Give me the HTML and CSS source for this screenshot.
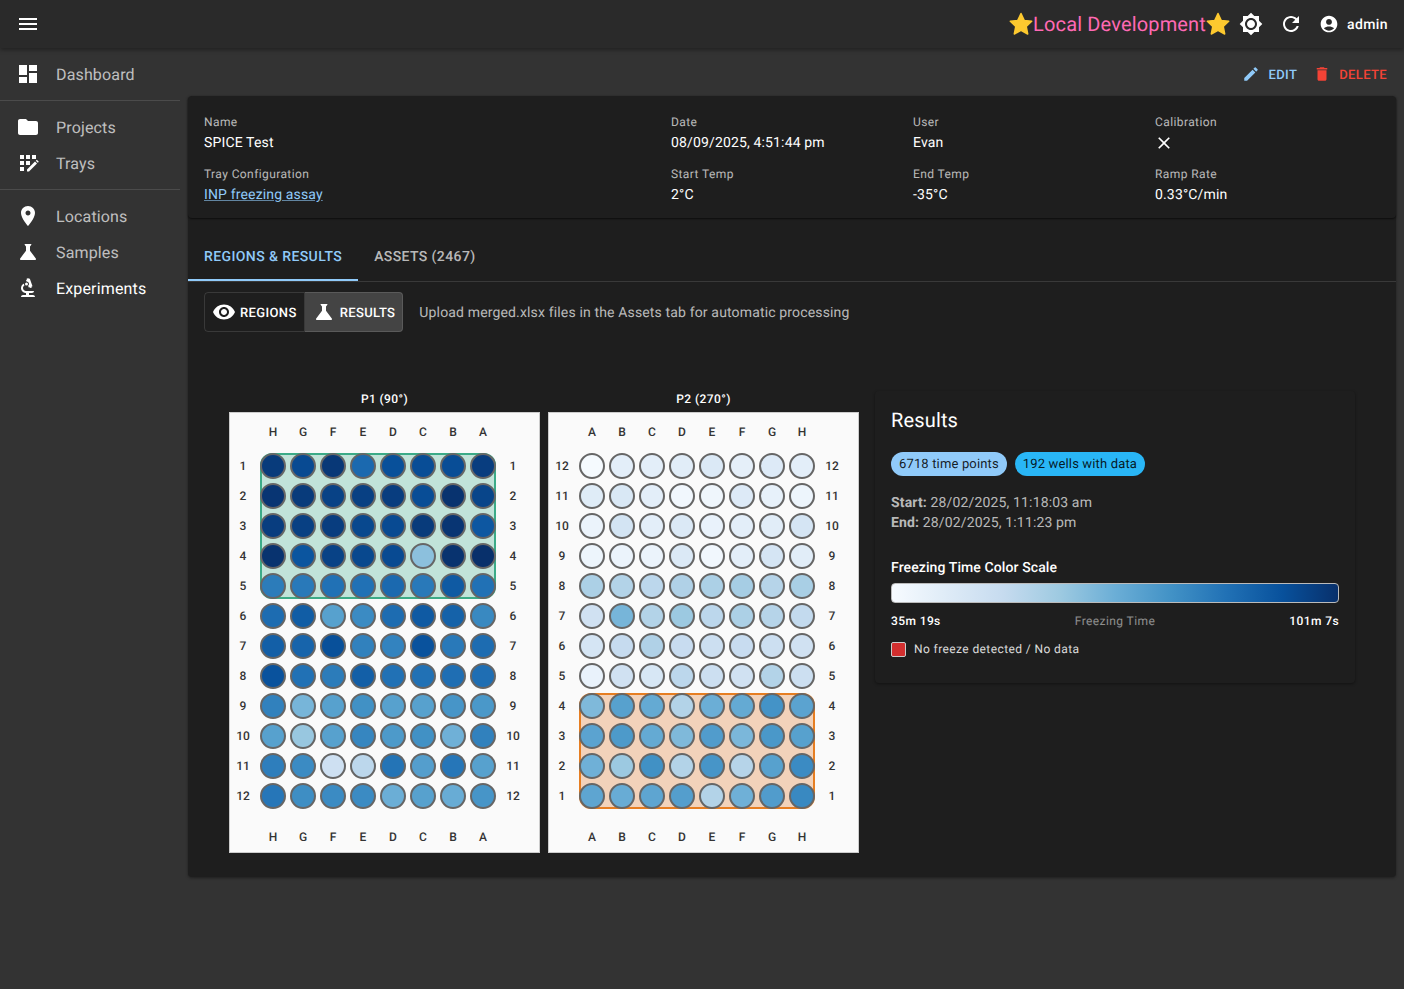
FILE: index.html
```html
<!DOCTYPE html>
<html lang="en">
<head>
    <meta charset="UTF-8">
    <meta name="viewport" content="width=device-width, initial-scale=1.0">
    <title>SPICE Test</title>
    <link rel="stylesheet" href="styles.css">
</head>
<body>

    <header class="topbar">
        <button class="icon-btn menu-btn">
            <svg viewBox="0 0 24 24"><path d="M3 18h18v-2H3v2zm0-5h18v-2H3v2zm0-7v2h18V6H3z"/></svg>
        </button>
        <div class="topbar-right">
            <div class="env-title">
                <svg class="star" viewBox="0 0 24 24"><path d="M12 1.500l3.200 6.900 7.500.9-5.500 5.200 1.500 7.500-6.700-3.700-6.700 3.700 1.500-7.500-5.500-5.200 7.500-.9z"/></svg>
                <span>Local Development</span>
                <svg class="star" viewBox="0 0 24 24"><path d="M12 1.500l3.200 6.900 7.500.9-5.500 5.200 1.500 7.500-6.700-3.700-6.700 3.700 1.500-7.500-5.500-5.200 7.500-.9z"/></svg>
            </div>
            <button class="icon-btn">
                <svg viewBox="0 0 24 24"><path d="M20 8.69V4h-4.690L12 .69 8.690 4H4v4.690L.69 12 4 15.310V20h4.690L12 23.310 15.310 20H20v-4.690L23.310 12 20 8.690zM12 18c-3.310 0-6-2.690-6-6s2.690-6 6-6 6 2.690 6 6-2.690 6-6 6zm0-10c-2.210 0-4 1.790-4 4s1.790 4 4 4 4-1.790 4-4-1.790-4-4-4z"/></svg>
            </button>
            <button class="icon-btn">
                <svg viewBox="0 0 24 24"><path d="M17.650 6.350C16.200 4.900 14.210 4 12 4c-4.420 0-7.990 3.580-7.990 8s3.570 8 7.990 8c3.730 0 6.840-2.550 7.730-6h-2.080c-.82 2.330-3.040 4-5.650 4-3.310 0-6-2.690-6-6s2.690-6 6-6c1.660 0 3.140.69 4.220 1.780L13 11h7V4l-2.350 2.350z"/></svg>
            </button>
            <div class="user">
                <svg viewBox="0 0 24 24"><path d="M12 2C6.480 2 2 6.480 2 12s4.480 10 10 10 10-4.480 10-10S17.520 2 12 2zm0 4c1.930 0 3.500 1.570 3.500 3.500S13.930 13 12 13s-3.500-1.570-3.500-3.500S10.070 6 12 6zm0 14c-2.030 0-4.430-.82-6.140-2.880C7.550 15.800 9.680 15 12 15s4.450.8 6.140 2.120C16.430 19.180 14.030 20 12 20z"/></svg>
                <span>admin</span>
            </div>
        </div>
    </header>

    <div class="layout">
        <nav class="sidebar">
            <a class="nav-item" href="#dashboard">
                <svg viewBox="0 0 24 24"><path d="M3 13h8V3H3v10zm0 8h8v-6H3v6zm10 0h8V11h-8v10zm0-18v6h8V3h-8z"/></svg>
                Dashboard
            </a>
            <hr class="nav-divider">
            <a class="nav-item" href="#projects">
                <svg viewBox="0 0 24 24"><path d="M10 4H4c-1.100 0-1.990.9-1.990 2L2 18c0 1.100.9 2 2 2h16c1.100 0 2-.9 2-2V8c0-1.100-.9-2-2-2h-8l-2-2z"/></svg>
                Projects
            </a>
            <a class="nav-item" href="#trays">
                <svg viewBox="0 0 24 24"><path d="M4 4h4v4H4zM10 4h4v4h-4zM16 4h4v4h-4zM4 10h4v4H4zM10 10h4v4h-4zM4 16h4v4H4zM11 20.500v-2l8-8 2 2-8 8zM19.800 9.700l1-1 2 2-1 1z"/></svg>
                Trays
            </a>
            <hr class="nav-divider">
            <a class="nav-item" href="#locations">
                <svg viewBox="0 0 24 24"><path d="M12 2C8.130 2 5 5.130 5 9c0 5.250 7 13 7 13s7-7.750 7-13c0-3.870-3.130-7-7-7zm0 9.500c-1.380 0-2.500-1.120-2.500-2.500s1.120-2.500 2.500-2.500 2.500 1.120 2.500 2.500-1.120 2.500-2.500 2.500z"/></svg>
                Locations
            </a>
            <a class="nav-item" href="#samples">
                <svg viewBox="0 0 24 24"><path d="M19.800 18.400 14 10.670V6.500l1.350-1.690c.26-.33.03-.81-.39-.81H9.040c-.42 0-.65.48-.39.81L10 6.500v4.170L4.200 18.400c-.49.66-.02 1.600.8 1.600h14c.82 0 1.290-.94.8-1.600z"/></svg>
                Samples
            </a>
            <a class="nav-item active" href="#experiments">
                <svg viewBox="0 0 24 24"><path d="M7 19c-1.100 0-2 .9-2 2h14c0-1.100-.9-2-2-2h-4v-2h3c1.100 0 2-.9 2-2h-8c-1.660 0-3-1.340-3-3 0-1.090.59-2.040 1.460-2.560C8.170 9.030 8 8.540 8 8c0-.21.04-.42.09-.62C6.280 8.130 5 9.920 5 12c0 2.760 2.240 5 5 5v2H7z"/><path d="M10.560 5.510C11.910 5.540 13 6.640 13 8c0 .75-.33 1.410-.85 1.870l.59 1.620.94-.34.34.94 1.880-.68-.34-.94.94-.34-2.740-7.520-.94.34-.34-.94-1.880.68.34.94-.94.35z"/><circle cx="10.500" cy="8" r="1.500"/></svg>
                Experiments
            </a>
        </nav>

        <main class="content">
            <div class="actions">
                <a class="action edit" href="#edit">
                    <svg viewBox="0 0 24 24"><path d="M3 17.250V21h3.750L17.810 9.940l-3.750-3.750L3 17.250zM20.710 7.040c.39-.39.39-1.020 0-1.410l-2.340-2.340a.9959.9959 0 0 0-1.410 0l-1.830 1.830 3.750 3.750 1.830-1.830z"/></svg>
                    Edit
                </a>
                <a class="action delete" href="#delete">
                    <svg viewBox="0 0 24 24"><path d="M6 19c0 1.100.9 2 2 2h8c1.100 0 2-.9 2-2V7H6v12zM19 4h-3.500l-1-1h-5l-1 1H5v2h14V4z"/></svg>
                    Delete
                </a>
            </div>

            <section class="panel">
                <div class="details">
                    <div class="field"><label>Name</label><p>SPICE Test</p></div>
                    <div class="field"><label>Date</label><p>08/09/2025, 4:51:44 pm</p></div>
                    <div class="field"><label>User</label><p>Evan</p></div>
                    <div class="field">
                        <label>Calibration</label>
                        <p><svg class="cross" viewBox="0 0 24 24"><path d="M19 6.410 17.590 5 12 10.590 6.410 5 5 6.410 10.590 12 5 17.590 6.410 19 12 13.410 17.590 19 19 17.590 13.410 12z"/></svg></p>
                    </div>
                    <div class="field"><label>Tray Configuration</label><p><a href="#tray">INP freezing assay</a></p></div>
                    <div class="field"><label>Start Temp</label><p>2°C</p></div>
                    <div class="field"><label>End Temp</label><p>-35°C</p></div>
                    <div class="field"><label>Ramp Rate</label><p>0.33°C/min</p></div>
                </div>

                <div class="tabs">
                    <a class="tab active" href="#results">Regions &amp; Results</a>
                    <a class="tab" href="#assets">Assets (2467)</a>
                </div>

                <div class="view-row">
                    <div class="toggle">
                        <button class="toggle-btn">
                            <svg viewBox="0 0 24 24"><path d="M12 4.500C7 4.500 2.730 7.610 1 12c1.730 4.390 6 7.500 11 7.500s9.270-3.110 11-7.500c-1.730-4.390-6-7.500-11-7.500zM12 17c-2.760 0-5-2.240-5-5s2.240-5 5-5 5 2.240 5 5-2.240 5-5 5zm0-8c-1.660 0-3 1.340-3 3s1.340 3 3 3 3-1.340 3-3-1.340-3-3-3z"/></svg>
                            Regions
                        </button>
                        <button class="toggle-btn selected">
                            <svg viewBox="0 0 24 24"><path d="M19.800 18.400 14 10.670V6.500l1.350-1.690c.26-.33.03-.81-.39-.81H9.040c-.42 0-.65.48-.39.81L10 6.500v4.170L4.200 18.400c-.49.66-.02 1.600.8 1.600h14c.82 0 1.290-.94.8-1.600z"/></svg>
                            Results
                        </button>
                    </div>
                    <p class="hint">Upload merged.xlsx files in the Assets tab for automatic processing</p>
                </div>

                <div class="results-row">
                    <div class="plate-col">
                        <h4>P1 (90°)</h4>
                        <div class="plate" id="plate-1"></div>
                    </div>
                    <div class="plate-col">
                        <h4>P2 (270°)</h4>
                        <div class="plate" id="plate-2"></div>
                    </div>

                    <aside class="summary">
                        <h3>Results</h3>
                        <div class="chips">
                            <span class="chip light">6718 time points</span>
                            <span class="chip sky">192 wells with data</span>
                        </div>
                        <p class="times"><b>Start:</b> 28/02/2025, 11:18:03 am</p>
                        <p class="times"><b>End:</b> 28/02/2025, 1:11:23 pm</p>
                        <h5>Freezing Time Color Scale</h5>
                        <div class="scale-bar"></div>
                        <div class="scale-labels">
                            <b>35m 19s</b>
                            <span>Freezing Time</span>
                            <b>101m 7s</b>
                        </div>
                        <div class="legend">
                            <i class="swatch"></i>
                            <span>No freeze detected / No data</span>
                        </div>
                    </aside>
                </div>
            </section>
        </main>
    </div>

    <script src="script.js"></script>
</body>
</html>
```

FILE: styles.css
```css
* {
    box-sizing: border-box;
}
body {
    font-family: Roboto, "Liberation Sans", sans-serif;
    text-rendering: geometricPrecision;
    background-color: #333;
    color: #fff;
    margin: 0;
    padding: 0;
    min-height: 989px;
}
svg {
    display: block;
    fill: currentColor;
}
a {
    text-decoration: none;
    color: inherit;
}
p, h3, h4, h5 {
    margin: 0;
}

/* top bar */
.topbar {
    height: 48px;
    background-color: #2a2a2a;
    box-shadow: 0 2px 4px rgba(0, 0, 0, 0.35);
    display: flex;
    align-items: center;
    justify-content: space-between;
    padding: 0 16px 0 8px;
    position: relative;
}
.icon-btn {
    width: 40px;
    height: 40px;
    padding: 8px;
    background: none;
    border: none;
    color: #fff;
}
.topbar-right {
    display: flex;
    align-items: center;
}
.env-title {
    display: flex;
    align-items: center;
    font-size: 20px;
    letter-spacing: 0.15px;
    color: #ff69b4;
    margin-right: 1px;
}
.star {
    width: 24px;
    height: 24px;
    fill: #fdc92f;
    stroke: #fdc92f;
    stroke-width: 1.5;
    stroke-linejoin: round;
}
.user {
    display: flex;
    align-items: center;
    gap: 8px;
    padding-top: 2px;
    font-size: 14px;
    font-weight: 500;
    letter-spacing: 0.4px;
    margin-left: 8px;
}
.user svg {
    width: 20px;
    height: 20px;
    margin-bottom: 2px;
}

/* sidebar */
.layout {
    display: flex;
}
.sidebar {
    width: 180px;
    flex-shrink: 0;
    padding-top: 8px;
}
.nav-item {
    height: 36px;
    display: flex;
    align-items: center;
    padding-left: 16px;
    font-size: 16px;
    letter-spacing: 0.15px;
    color: rgba(255, 255, 255, 0.7);
}
.nav-item svg {
    width: 24px;
    height: 24px;
    color: #fff;
    margin-right: 16px;
}
.nav-item.active {
    color: #fff;
}
.nav-divider {
    border: none;
    border-top: 1px solid rgba(255, 255, 255, 0.12);
    margin: 8px 0;
}

/* main */
.content {
    flex: 1;
    padding: 0 8px;
}
.actions {
    height: 48px;
    display: flex;
    justify-content: flex-end;
    align-items: center;
    gap: 16px;
    padding: 4px 9px 0 0;
}
.action {
    display: flex;
    align-items: center;
    gap: 8px;
    padding-top: 2px;
    font-size: 13px;
    font-weight: 500;
    letter-spacing: 0.37px;
    text-transform: uppercase;
}
.action svg {
    width: 18px;
    height: 18px;
    margin-bottom: 2px;
}
.action.edit {
    color: #90caf9;
}
.action.delete {
    color: #f44336;
}
.panel {
    background-color: #1e1e1e;
    border-radius: 4px;
    box-shadow: 0 1px 3px rgba(0, 0, 0, 0.4);
    padding-bottom: 24px;
}
.details {
    height: 122px;
    padding: 16px 16px 0;
    display: grid;
    grid-template-columns: 467px 242px 242px 1fr;
    grid-auto-rows: 52px;
    border-radius: 4px;
    box-shadow: 0 1px 2px rgba(0, 0, 0, 0.6);
}
.field label {
    display: block;
    font-size: 12px;
    line-height: 20px;
    letter-spacing: 0.4px;
    color: rgba(255, 255, 255, 0.7);
}
.field p {
    font-size: 14px;
    line-height: 22px;
    letter-spacing: 0.15px;
    height: 20px;
}
.field a {
    color: #90caf9;
    text-decoration: underline;
    text-decoration-color: rgba(144, 202, 249, 0.6);
}
.cross {
    width: 20px;
    height: 20px;
    margin: 1px 0 0 -1px;
}
.tabs {
    display: flex;
    margin-top: 15px;
    height: 49px;
    border-bottom: 1px solid rgba(255, 255, 255, 0.12);
}
.tab {
    height: 48px;
    padding: 0 16px;
    display: flex;
    align-items: center;
    font-size: 14px;
    font-weight: 500;
    letter-spacing: 0.4px;
    text-transform: uppercase;
    color: rgba(255, 255, 255, 0.7);
}
.tab.active {
    color: #90caf9;
    border-bottom: 2px solid #90caf9;
    padding-top: 2px;
}
.view-row {
    display: flex;
    align-items: center;
    gap: 16px;
    padding: 10px 16px 0;
}
.toggle {
    display: flex;
    height: 40px;
}
.toggle-btn {
    display: flex;
    align-items: center;
    gap: 4px;
    padding: 2px 7px 0;
    font-family: inherit;
    font-size: 13px;
    font-weight: 500;
    letter-spacing: 0.37px;
    text-transform: uppercase;
    text-rendering: geometricPrecision;
    color: #fff;
    background: none;
    border: 1px solid rgba(255, 255, 255, 0.12);
    border-radius: 4px 0 0 4px;
}
.toggle-btn svg {
    width: 24px;
    height: 24px;
    margin-bottom: 2px;
}
.toggle-btn.selected {
    background-color: #444;
    border-left: none;
    border-radius: 0 4px 4px 0;
}
.hint {
    font-size: 14px;
    line-height: 22px;
    padding-top: 2px;
    letter-spacing: 0.15px;
    color: rgba(255, 255, 255, 0.7);
}

/* plates + results card */
.results-row {
    display: flex;
    align-items: flex-start;
    padding: 59px 0 0 41px;
    gap: 8px;
}
.plate-col h4 {
    font-size: 12px;
    font-weight: 500;
    line-height: 16px;
    letter-spacing: 0.4px;
    text-align: center;
    margin-bottom: 5px;
}
.plate {
    width: 311px;
    height: 441px;
    background-color: #fafafa;
    border: 1px solid #ccc;
    display: grid;
    grid-template-columns: 28px repeat(8, 30px) 30px;
    grid-template-rows: 38px repeat(12, 30px) 41px;
    font-size: 12px;
    font-weight: 500;
    color: #333;
}
.plate-label {
    display: flex;
    align-items: center;
    justify-content: center;
}
.plate-label.left {
    margin-right: 2px;
}
.plate-label.bottom {
    height: 30px;
    align-self: end;
}
.well {
    width: 26px;
    height: 26px;
    margin: 2px;
    border: 2px solid #666;
    border-radius: 50%;
    z-index: 1;
}
.region {
    margin: 2px;
    border-radius: 12px;
    border: 2px solid;
}
.region.green {
    background-color: #c1e3d9;
    border-color: #3cab87;
}
.region.orange {
    background-color: #f2d2ba;
    border-color: #e67e22;
}
.summary {
    width: 480px;
    height: 292px;
    margin-left: 8px;
    padding: 16px;
    background-color: #1e1e1e;
    border-radius: 4px;
    box-shadow: 0 1px 3px rgba(0, 0, 0, 0.4);
}
.summary h3 {
    font-size: 20px;
    font-weight: 400;
    line-height: 27px;
    letter-spacing: 0.15px;
}
.chips {
    display: flex;
    gap: 8px;
    margin: 18px 0 17px;
}
.chip {
    height: 24px;
    padding: 0 8px;
    border-radius: 12px;
    font-size: 13px;
    line-height: 26px;
    letter-spacing: 0.15px;
    color: rgba(0, 0, 0, 0.87);
}
.chip.light {
    background-color: #90caf9;
}
.chip.sky {
    background-color: #29b6f6;
}
.times {
    font-size: 14px;
    line-height: 20px;
    letter-spacing: 0.15px;
    color: rgba(255, 255, 255, 0.7);
}
.summary h5 {
    font-size: 14px;
    font-weight: 500;
    line-height: 20px;
    letter-spacing: 0.1px;
    margin-top: 25px;
}
.scale-bar {
    height: 20px;
    margin-top: 5px;
    border: 1px solid #bbb;
    border-radius: 4px;
    background: linear-gradient(to right, #f7fbff, #deebf7, #c6dbef, #9ecae1, #6baed6, #4292c6, #2171b5, #08519c, #08306b);
}
.scale-labels {
    display: flex;
    justify-content: space-between;
    margin-top: 8px;
    font-size: 12px;
    line-height: 20px;
    letter-spacing: 0.4px;
    color: rgba(255, 255, 255, 0.5);
}
.scale-labels b {
    font-weight: 500;
    color: #fff;
}
.legend {
    display: flex;
    align-items: center;
    gap: 8px;
    margin-top: 8px;
    font-size: 12px;
    line-height: 20px;
    letter-spacing: 0.4px;
    color: rgba(255, 255, 255, 0.85);
}
.swatch {
    width: 15px;
    height: 15px;
    background-color: #d32f2f;
    border: 1px solid #ccc;
    border-radius: 2px;
}
```

FILE: script.js
```js
// Freezing time per well, 0 (earliest) to 100 (latest), rows top to bottom as drawn
const plates = [
    {
        id: 'plate-1',
        cols: ['H', 'G', 'F', 'E', 'D', 'C', 'B', 'A'],
        rows: [1, 2, 3, 4, 5, 6, 7, 8, 9, 10, 11, 12],
        region: { color: 'green', rowStart: 2, rowEnd: 7 },
        values: [
            [96, 90, 97, 78, 88, 89, 89, 95],
            [98, 96, 93, 94, 95, 89, 99, 92],
            [95, 94, 95, 91, 90, 96, 98, 85],
            [99, 86, 93, 91, 90, 42, 99, 100],
            [71, 72, 75, 75, 78, 72, 84, 75],
            [77, 83, 56, 65, 77, 84, 81, 66],
            [82, 80, 88, 69, 68, 87, 72, 77],
            [87, 75, 71, 82, 75, 75, 76, 76],
            [69, 47, 56, 63, 56, 56, 61, 60],
            [56, 39, 56, 67, 59, 63, 49, 69],
            [70, 65, 21, 28, 74, 57, 73, 56],
            [73, 64, 65, 65, 50, 56, 51, 61]
        ]
    },
    {
        id: 'plate-2',
        cols: ['A', 'B', 'C', 'D', 'E', 'F', 'G', 'H'],
        rows: [12, 11, 10, 9, 8, 7, 6, 5, 4, 3, 2, 1],
        region: { color: 'orange', rowStart: 10, rowEnd: 14 },
        values: [
            [1, 10, 10, 11, 14, 9, 13, 10],
            [12, 15, 10, 3, 4, 13, 8, 5],
            [6, 18, 10, 14, 7, 10, 11, 17],
            [5, 6, 6, 14, 3, 10, 17, 11],
            [33, 31, 28, 32, 33, 35, 30, 34],
            [20, 47, 31, 38, 28, 33, 30, 26],
            [17, 25, 32, 24, 22, 24, 22, 20],
            [7, 20, 16, 28, 22, 20, 31, 22],
            [45, 56, 52, 31, 50, 52, 62, 55],
            [55, 59, 52, 45, 58, 46, 60, 56],
            [49, 38, 63, 31, 61, 30, 56, 65],
            [54, 51, 54, 57, 31, 49, 58, 66]
        ]
    }
];

const blues = [
    [247, 251, 255], [222, 235, 247], [198, 219, 239], [158, 202, 225], [107, 174, 214],
    [66, 146, 198], [33, 113, 181], [8, 81, 156], [8, 48, 107]
];

function wellColor(value) {
    const pos = value / 100 * (blues.length - 1);
    const i = Math.min(Math.floor(pos), blues.length - 2);
    const t = pos - i;
    const c = blues[i].map((v, k) => Math.round(v + (blues[i + 1][k] - v) * t));
    return `rgb(${c[0]}, ${c[1]}, ${c[2]})`;
}

function addCell(plate, className, row, col, text) {
    const cell = document.createElement('div');
    cell.className = className;
    cell.style.gridRow = row;
    cell.style.gridColumn = col;
    if (text !== undefined) cell.textContent = text;
    plate.appendChild(cell);
    return cell;
}

plates.forEach(p => {
    const el = document.getElementById(p.id);

    addCell(el, `region ${p.region.color}`, `${p.region.rowStart} / ${p.region.rowEnd}`, '2 / 10');

    p.cols.forEach((name, c) => {
        addCell(el, 'plate-label', 1, c + 2, name);
        addCell(el, 'plate-label bottom', 14, c + 2, name);
    });

    p.rows.forEach((name, r) => {
        addCell(el, 'plate-label left', r + 2, 1, name);
        addCell(el, 'plate-label', r + 2, 10, name);
        p.values[r].forEach((value, c) => {
            const well = addCell(el, 'well', r + 2, c + 2);
            well.style.backgroundColor = wellColor(value);
        });
    });
});
```
